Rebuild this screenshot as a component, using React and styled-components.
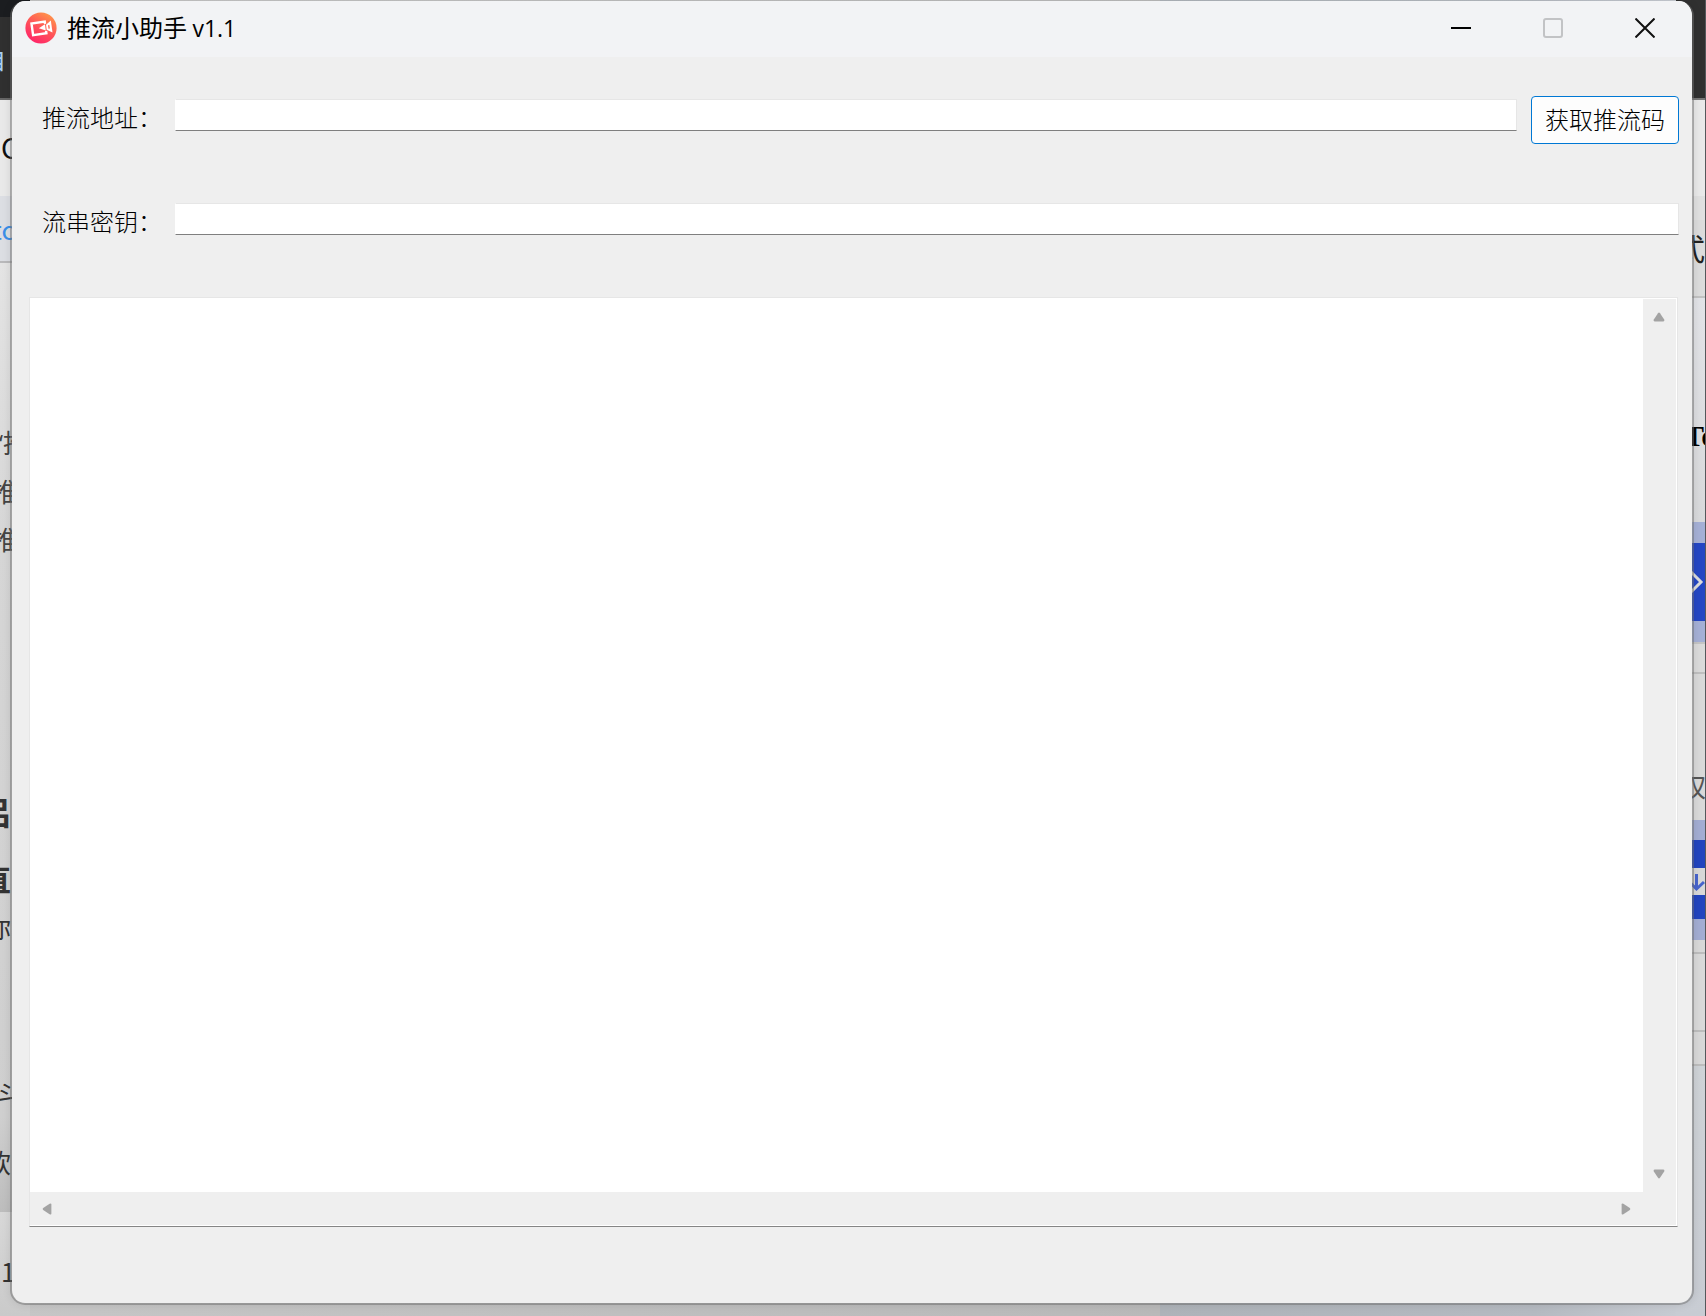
import React from 'react';
import styled, { createGlobalStyle } from 'styled-components';

const GlobalStyle = createGlobalStyle`
  *, *::before, *::after { box-sizing: border-box; }
  html, body, #root { height: 100%; margin: 0; }
  body {
    overflow: hidden;
    font-family: "Noto Sans CJK SC", "Noto Sans", sans-serif;
    color: #000;
  }
  button, input, textarea { font: inherit; color: inherit; margin: 0; }
`;

/* ---------- desktop and the pages behind the window ---------- */

const Desktop = styled.div`
  position: relative;
  height: 100%;
  padding: 1px 12px 11px 10px;
  overflow: hidden;
  background: #303030;
`;

const Backdrop = styled.div`
  position: absolute;
  inset: 0;
  display: flex;
  justify-content: space-between;
  background: linear-gradient(90deg, #c6c6c6 0, #b9b9b9 68%, #aeb3b9 68%, #b5bac1 90%, #cbcfd6 100%);
`;

const PageEdge = styled.div`
  position: relative;
  display: flex;
  flex-direction: column;
  width: 30px;
  overflow: hidden;
`;

const RightEdge = styled(PageEdge)`
  border-right: 1px solid #55585b;
`;

const Band = styled.div`
  flex: ${(p) => (p.$h ? `0 0 ${p.$h}px` : '1')};
  background: ${(p) => p.$c};
`;

const Scrap = styled.span`
  position: absolute;
  left: ${(p) => p.$x}px;
  top: ${(p) => p.$y}px;
  white-space: nowrap;
  line-height: 32px;
  font-size: ${(p) => p.$size || 26}px;
  font-weight: ${(p) => (p.$bold ? 700 : 400)};
  font-family: ${(p) => p.$font || 'inherit'};
  color: ${(p) => p.$c || '#333'};
`;

const Glyph = styled.svg`
  position: absolute;
  left: ${(p) => p.$x}px;
  top: ${(p) => p.$y}px;
`;

/* ---------- application window ---------- */

const Window = styled.main`
  position: relative;
  display: flex;
  flex-direction: column;
  height: 100%;
  border: 2px solid rgba(110, 110, 110, 0.5);
  border-top: 0;
  border-radius: 15px;
  overflow: hidden;
  background: #efefef;
  background-clip: padding-box;
  box-shadow: 0 0 8px rgba(0, 0, 0, 0.1);
`;

const TitleBar = styled.header`
  display: flex;
  align-items: center;
  flex: 0 0 56px;
  padding: 0 1px 2px 13px;
  background: #f2f3f5;
`;

const Title = styled.h1`
  flex: 1;
  margin: 0 0 0 10px;
  font-size: 24px;
  line-height: 30px;
  padding-bottom: 2px;
  font-weight: 400;
`;

const Version = styled.span`
  font-family: "Open Sans", sans-serif;
  font-size: 23px;
`;

const CaptionButton = styled.button`
  display: flex;
  align-items: center;
  justify-content: center;
  width: 92px;
  height: 54px;
  padding: 0;
  border: 0;
  background: transparent;
`;

const Form = styled.form`
  display: flex;
  flex-direction: column;
  flex: 1;
  min-height: 0;
  padding-top: 39px;
`;

const Row = styled.div`
  display: flex;
  align-items: flex-start;
  height: 48px;
  margin-bottom: ${(p) => p.$gap}px;
  padding: 0 13px 0 30px;
`;

const Label = styled.label`
  flex: 0 0 133px;
  font-size: 24px;
  line-height: 42px;
  font-weight: 300;
  white-space: nowrap;
`;

const Field = styled.input`
  flex: 1;
  min-width: 0;
  height: 32px;
  margin-top: 3px;
  padding: 0 6px;
  border: 1px solid #e6e6e6;
  border-left-color: #fff;
  border-bottom-color: #7f7f7f;
  border-radius: 0;
  outline: 0;
  background: #fff;
  font-size: 20px;
`;

const FetchButton = styled.button`
  flex: 0 0 148px;
  height: 48px;
  margin-left: 14px;
  padding: 0 0 2px;
  border: 1px solid #0078d4;
  border-radius: 4px;
  background: #fdfdfd;
  font-size: 24px;
  font-weight: 300;
  line-height: 42px;
  white-space: nowrap;
`;

const LogFrame = styled.section`
  display: grid;
  grid-template-columns: 1fr 33px;
  grid-template-rows: 1fr 33px;
  flex: 1;
  min-height: 0;
  margin: 0 14px 76px 17px;
  padding: 1px 1px 1px 0;
  border: 1px solid #e6e6e6;
  border-bottom-color: #858585;
  background: #fff;
`;

const Log = styled.textarea`
  width: 100%;
  height: 100%;
  padding: 6px;
  border: 0;
  outline: 0;
  resize: none;
  overflow: hidden;
  background: #fff;
  font-size: 20px;
`;

const ScrollTrack = styled.div`
  display: flex;
  flex-direction: ${(p) => (p.$vertical ? 'column' : 'row')};
  justify-content: space-between;
  background: #efefef;
`;

const ScrollButton = styled.button`
  display: flex;
  align-items: center;
  justify-content: center;
  width: ${(p) => (p.$vertical ? 32 : 34)}px;
  height: ${(p) => (p.$vertical ? 36 : 33)}px;
  padding: 0;
  border: 0;
  background: transparent;
`;

const Corner = styled.div`
  background: #efefef;
`;

const Arrow = ({ turn }) => (
  <svg width="12" height="12" viewBox="0 0 12 12" aria-hidden="true">
    <path
      transform={`rotate(${turn} 6 6)`}
      d="M5 2.200Q6 1 7 2.200L11.200 8.600Q12 10.400 10.400 10.400H1.600Q0 10.400 .8 8.600Z"
      fill="#a3a3a3"
    />
  </svg>
);

const Logo = () => (
  <svg width="32" height="32" viewBox="0 0 32 32" aria-hidden="true">
    <defs>
      <linearGradient id="logoFill" x1="0.2" y1="1" x2="0.8" y2="0">
        <stop offset="0" stopColor="#ff1f6b" />
        <stop offset="0.5" stopColor="#ff5358" />
        <stop offset="1" stopColor="#ff9a49" />
      </linearGradient>
    </defs>
    <circle cx="16" cy="16" r="15.6" fill="url(#logoFill)" />
    <g transform="rotate(-8 16 16)">
      <path d="M20.600 12.400V10.200H7.200V22H20.600V19.600" fill="none" stroke="#fff" strokeWidth="2.4" />
      <path d="M13.800 16L20.400 12.800V19.200Z" fill="#fff" />
      <path d="M21.400 13.600L26.800 10V22L21.400 18.400Z" fill="#fff" />
      <path d="M24 14.200V17.800" stroke="#ff6a55" strokeWidth="1.4" />
    </g>
  </svg>
);

const leftBands = [
  [17, '#1b1d20'],
  [81, '#303030'],
  [2, '#666'],
  [96, '#e9e9e9'],
  [65, '#dcdee3'],
  [2, '#b9b9bb'],
  [949, 'linear-gradient(#e4e4e4, #d6d6d6 30%, #cfcfcf 90%, #bdbdbd)'],
  [0, 'linear-gradient(#d8d8d8, #cacaca)'],
];

const rightBands = [
  [98, '#303030'],
  [2, '#777'],
  [96, '#e9e9e9'],
  [24, '#e0e0e0'],
  [76, '#dcdcdc'],
  [2, '#c2c2c2'],
  [224, 'linear-gradient(#e2e3e7, #d8d9db)'],
  [21, '#a5b0d6'],
  [78, '#2446c4'],
  [21, '#a5b0d6'],
  [2, '#c4c4c4'],
  [28, '#dadada'],
  [2, '#bfbfbf'],
  [146, '#d9d9d9'],
  [20, '#a3add3'],
  [28, '#2244bf'],
  [27, '#d8d8d8'],
  [24, '#2244bf'],
  [21, '#a3add3'],
  [12, '#d8d8d8'],
  [2, '#bdbdbd'],
  [76, '#d9d9d9'],
  [2, '#bdbdbd'],
  [32, '#d8d8d8'],
  [2, '#bdbdbd'],
  [0, 'linear-gradient(#cfd3d7, #c8ccd3)'],
];

const Bands = ({ items }) =>
  items.map(([height, color], i) => <Band key={i} $h={height} $c={color} />);

export default function App() {
  return (
    <Desktop>
      <GlobalStyle />
      <Backdrop aria-hidden="true">
        <PageEdge>
          <Bands items={leftBands} />
          <Scrap $x={-18} $y={43} $size={24} $c="#a9d0f0">自</Scrap>
          <Scrap $x={1} $y={131} $size={28} $c="#111">C</Scrap>
          <Scrap $x={-8} $y={213} $c="#3b8fe8">tc</Scrap>
          <Scrap $x={-6} $y={427} $c="#444" $font={'"Open Sans", "Noto Sans CJK SC", sans-serif'}>
            “推
          </Scrap>
          <Scrap $x={-8} $y={475} $c="#444">推</Scrap>
          <Scrap $x={-8} $y={523} $c="#444">推</Scrap>
          <Scrap $x={-20} $y={795} $size={32} $bold>吕</Scrap>
          <Scrap $x={-19} $y={862} $size={30} $bold>直：</Scrap>
          <Scrap $x={-15} $y={911}>你</Scrap>
          <Scrap $x={-3} $y={1077}>斗</Scrap>
          <Scrap $x={-15} $y={1146}>软</Scrap>
          <Scrap $x={1} $y={1255}>1</Scrap>
        </PageEdge>
        <RightEdge>
          <Bands items={rightBands} />
          <Scrap $x={-1} $y={231} $size={30} $c="#222">式</Scrap>
          <Scrap $x={8} $y={420} $size={30} $c="#000" $bold $font={'"Liberation Serif", serif'}>
            To
          </Scrap>
          <Scrap $x={4} $y={770} $c="#555">权</Scrap>
          <Glyph $x={14} $y={570} width="14" height="24" viewBox="0 0 14 24">
            <path d="M1 2L11 12L1 22" fill="none" stroke="#dcdcdc" strokeWidth="3" />
          </Glyph>
          <Glyph $x={12} $y={873} width="18" height="20" viewBox="0 0 18 20">
            <path d="M8.500 1V16M1.500 9L8.500 16L16 9" fill="none" stroke="#4864cc" strokeWidth="3" />
          </Glyph>
        </RightEdge>
      </Backdrop>

      <Window>
        <TitleBar>
          <Logo />
          <Title>
            推流小助手 <Version>v1.1</Version>
          </Title>
          <CaptionButton type="button" aria-label="最小化">
            <svg width="20" height="20" viewBox="0 0 20 20">
              <path d="M0 10H20" stroke="#000" strokeWidth="2" />
            </svg>
          </CaptionButton>
          <CaptionButton type="button" aria-label="最大化" disabled>
            <svg width="20" height="20" viewBox="0 0 20 20">
              <rect x="1" y="1" width="18" height="18" rx="2" fill="none" stroke="#c2c3c5" strokeWidth="2" />
            </svg>
          </CaptionButton>
          <CaptionButton type="button" aria-label="关闭">
            <svg width="20" height="20" viewBox="0 0 20 20">
              <path d="M.5 .5L19.500 19.500M19.500 .5L.5 19.500" stroke="#111" strokeWidth="2" />
            </svg>
          </CaptionButton>
        </TitleBar>

        <Form onSubmit={(e) => e.preventDefault()}>
          <Row $gap={56}>
            <Label htmlFor="push-url">推流地址：</Label>
            <Field id="push-url" type="text" />
            <FetchButton type="submit">获取推流码</FetchButton>
          </Row>
          <Row $gap={49}>
            <Label htmlFor="stream-key">流串密钥：</Label>
            <Field id="stream-key" type="text" />
          </Row>
          <LogFrame>
            <Log aria-label="日志" spellCheck={false} />
            <ScrollTrack $vertical>
              <ScrollButton type="button" $vertical aria-label="向上滚动">
                <Arrow turn={0} />
              </ScrollButton>
              <ScrollButton type="button" $vertical aria-label="向下滚动">
                <Arrow turn={180} />
              </ScrollButton>
            </ScrollTrack>
            <ScrollTrack>
              <ScrollButton type="button" aria-label="向左滚动">
                <Arrow turn={270} />
              </ScrollButton>
              <ScrollButton type="button" aria-label="向右滚动">
                <Arrow turn={90} />
              </ScrollButton>
            </ScrollTrack>
            <Corner />
          </LogFrame>
        </Form>
      </Window>
    </Desktop>
  );
}
